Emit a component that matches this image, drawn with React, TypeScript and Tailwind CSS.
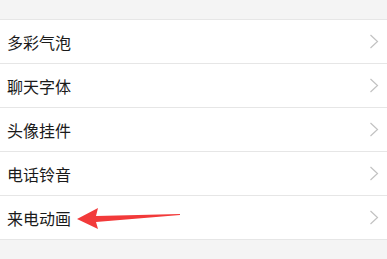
const items = ['多彩气泡', '聊天字体', '头像挂件', '电话铃音', '来电动画'];

function Chevron() {
  return (
    <svg width="10" height="15" viewBox="0 0 10 15" className="text-[#c2c2c2]">
      <path d="M1.5 1 L8.5 7.5 L1.5 14" fill="none" stroke="currentColor" strokeWidth="1.2" />
    </svg>
  );
}

export default function App() {
  return (
    <div className="relative w-[387px] h-[259px] bg-[#f4f4f4] overflow-hidden font-['Noto_Sans_CJK_SC',sans-serif]">
      <div className="h-[19px]" />
      <ul className="bg-white border-t border-[#e6e6e6]">
        {items.map((name) => (
          <li
            key={name}
            className="h-[44px] flex items-center justify-between pl-[7px] pr-[8px] border-b border-[#e6e6e6]"
          >
            <span className="text-[16px] leading-none text-[#1a1a1a]">{name}</span>
            <Chevron />
          </li>
        ))}
      </ul>

      {/* red annotation arrow */}
      <svg className="absolute left-[76px] top-[206px]" width="108" height="24" viewBox="0 0 108 24">
        <path
          d="M1 13 L22 2 L20 10 L104 8 L104 9 L20 16 L22 23 Z"
          fill="#f23a3a"
        />
      </svg>
    </div>
  );
}
